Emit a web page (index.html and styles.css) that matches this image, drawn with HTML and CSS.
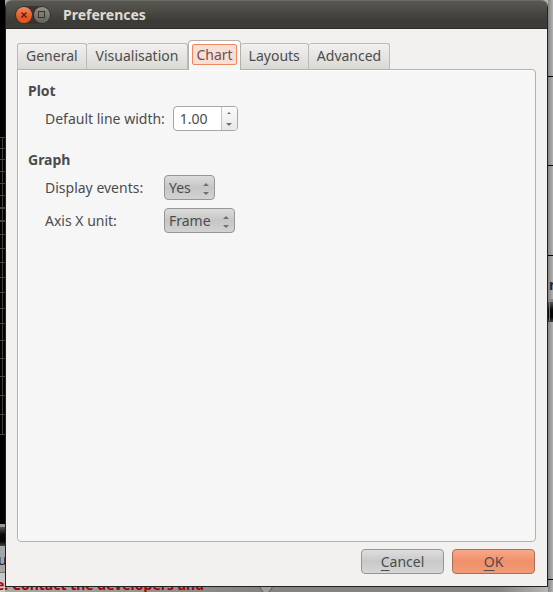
FILE: index.html
```html
<!DOCTYPE html>
<html lang="en">
<head>
<meta charset="utf-8">
<title>Preferences</title>
<link rel="stylesheet" href="styles.css">
</head>
<body>
<div class="backdrop">
  <svg class="backdrop-left" width="5" height="592" viewBox="0 0 5 592" aria-hidden="true">
    <defs>
      <linearGradient id="bar" x1="0" y1="0" x2="0" y2="1">
        <stop offset="0" stop-color="#555"/><stop offset=".4" stop-color="#080808"/><stop offset=".75" stop-color="#050505"/><stop offset="1" stop-color="#444"/>
      </linearGradient>
    </defs>
    <rect width="5" height="524" fill="#000"/>
    <path d="M2.5 137V434M0 137.500H5M0 148.500H5M0 159.500H5M0 171.500H5M0 183.500H5M0 195.500H5M0 234.500H5M0 248.500H5M0 262.500H5M0 277.500H5M0 292.500H5M0 308.500H5M0 323.500H5M0 340.500H5M0 358.500H5M0 376.500H5M0 395.500H5M0 414.500H5M0 434.500H5" stroke="#444"/>
    <path d="M0 208H5M0 221H5" stroke="#444" stroke-width="2"/>
    <rect y="524" width="5" height="3" fill="#999"/>
    <rect y="527" width="5" height="19" fill="url(#bar)"/>
    <rect y="546" width="5" height="46" fill="#a6a5a6"/>
    <rect y="572" width="5" height="1" fill="#777"/>
    <rect y="573" width="5" height="19" fill="#c9c8c9"/>
  </svg>
  <svg class="backdrop-right" width="5" height="592" viewBox="0 0 5 592" aria-hidden="true">
    <path d="M0 76.500H5M0 165.500H5M0 255.500H5M0 579.500H5" stroke="#000"/>
    <rect y="299" width="5" height="3" fill="#888"/>
    <rect y="302" width="5" height="20" fill="url(#bar)"/>
    <path d="M1.500 302V321" stroke="#777"/>
  </svg>
  <span class="backdrop-letter left-letter">u</span>
  <span class="backdrop-letter right-letter">n</span>
  <p class="backdrop-message">e: Contact the developers and</p>
  <svg class="backdrop-knob" width="16" height="16" viewBox="0 0 16 16" aria-hidden="true">
    <path d="M2 0V7L5.500 11.500H10.500L14 7V0" fill="#a09fa0" stroke="#555"/>
  </svg>
</div>

<main class="dialog">
  <header class="titlebar">
    <div class="window-controls">
      <button class="window-button close" type="button" aria-label="Close">
        <svg width="16" height="16" viewBox="0 0 16 16"><path d="M5.500 5.500L10.500 10.500M10.500 5.500L5.500 10.500" stroke="#4a2415" stroke-width="1.400"/></svg>
      </button>
      <button class="window-button maximize" type="button" aria-label="Maximize">
        <svg width="16" height="16" viewBox="0 0 16 16"><rect x="4.500" y="4.500" width="6" height="6" fill="none" stroke="#35342f"/></svg>
      </button>
    </div>
    <h1>Preferences</h1>
  </header>

  <form class="content">
    <nav class="tabs" role="tablist">
      <button class="tab" type="button" role="tab">General</button>
      <button class="tab" type="button" role="tab">Visualisation</button>
      <button class="tab active" type="button" role="tab" aria-selected="true"><span>Chart</span></button>
      <button class="tab" type="button" role="tab">Layouts</button>
      <button class="tab" type="button" role="tab">Advanced</button>
    </nav>

    <div class="panel" role="tabpanel">
      <section class="group">
        <h2>Plot</h2>
        <div class="row">
          <label for="line-width">Default line width:</label>
          <div class="spin">
            <input id="line-width" type="text" value="1.00">
            <div class="spin-buttons">
              <button type="button" aria-label="Increase"><svg width="6" height="3" viewBox="0 0 6 3"><path d="M1 3L3 1L5 3Z"/></svg></button>
              <button type="button" aria-label="Decrease"><svg width="6" height="3" viewBox="0 0 6 3"><path d="M0 0L3 3L6 0Z"/></svg></button>
            </div>
          </div>
        </div>
      </section>
      <section class="group">
        <h2>Graph</h2>
        <div class="row aligned">
          <label for="events">Display events:</label>
          <div class="picker">
            <select id="events"><option>Yes</option></select>
            <svg width="6" height="17" viewBox="0 0 6 17"><path d="M0 7L3 4L6 7ZM0 13L3 16L6 13Z"/></svg>
          </div>
        </div>
        <div class="row aligned">
          <label for="axis-unit">Axis X unit:</label>
          <div class="picker">
            <select id="axis-unit"><option>Frame</option></select>
            <svg width="6" height="17" viewBox="0 0 6 17"><path d="M0 7L3 4L6 7ZM0 13L3 16L6 13Z"/></svg>
          </div>
        </div>
      </section>
    </div>

    <footer class="actions">
      <button class="action" type="button"><u>C</u>ancel</button>
      <button class="action primary" type="submit"><u>O</u>K</button>
    </footer>
  </form>
</main>
</body>
</html>
```

FILE: styles.css
```css
* {
  box-sizing: border-box;
}

body {
  margin: 0;
  min-height: 100vh;
  padding: 0 5px 5px;
  display: flex;
  overflow: hidden;
  background: #a09fa0;
  color: #4c4c4c;
  font: 14px/20px "Noto Sans", "Open Sans", sans-serif;
}

button,
input,
select {
  margin: 0;
  padding: 0;
  color: inherit;
  font: inherit;
}

/* Window behind the dialog */
.backdrop {
  position: absolute;
  inset: 0;
  overflow: hidden;
  background: linear-gradient(90deg, #aaa, #858485 45%, #858485 90%, #bbb);
}

.backdrop-left {
  position: absolute;
  left: 0;
  top: 0;
}

.backdrop-right {
  position: absolute;
  right: 0;
  top: 0;
  background: linear-gradient(90deg, #858585, #b2b2b2);
}

.backdrop-letter {
  position: absolute;
  color: #252538;
}

.left-letter {
  left: -2px;
  top: 550px;
}

.right-letter {
  right: -5px;
  top: 275px;
  font-weight: bold;
}

.backdrop-message {
  position: absolute;
  left: -4px;
  top: 575px;
  margin: 0;
  color: #b00000;
  font-weight: bold;
  white-space: nowrap;
}

.backdrop-knob {
  position: absolute;
  left: 258px;
  top: 581px;
}

.dialog {
  position: relative;
  flex: 1;
  display: flex;
  flex-direction: column;
  border: 1px solid #222;
  border-top: 0;
  border-radius: 7px 7px 0 0;
  background: #f2f1f0;
}

.titlebar {
  display: flex;
  align-items: center;
  gap: 12px;
  height: 29px;
  padding: 0 9px;
  border-top: 1px solid #6b6963;
  border-bottom: 1px solid #2c2b28;
  border-radius: 6px 6px 0 0;
  background: linear-gradient(#5a5852, #3c3b37 75%);
}

.titlebar h1 {
  margin: 0;
  color: #dfdbd2;
  font-size: 14px;
  line-height: 20px;
}

.window-controls {
  display: flex;
  gap: 2px;
  padding: 1px;
  border-radius: 9px;
  background: #35342f;
}

.window-button {
  width: 16px;
  height: 16px;
  border: 0;
  border-radius: 50%;
}

.window-button svg,
.spin svg,
.picker svg {
  display: block;
}

.close {
  background: linear-gradient(#f58a5f, #e95420 65%, #e65a20);
}

.maximize {
  background: linear-gradient(#908e86, #65635c);
}

.content {
  flex: 1;
  display: flex;
  flex-direction: column;
  padding: 11px 11px 12px;
}

.tabs {
  position: relative;
  display: flex;
  align-items: flex-end;
  margin-bottom: -1px;
}

.tab {
  height: 27px;
  padding: 0 9px 2px;
  border: 1px solid #bdbab5;
  border-left-width: 0;
  border-bottom-color: #b4b1aa;
  border-radius: 3px 3px 0 0;
  background: linear-gradient(#f2f1f0, #dad8d5);
}

.tab:first-child {
  padding: 0 8px 2px;
  border-left-width: 1px;
}

.tab.active {
  height: 30px;
  padding: 0 3px 2px;
  border-color: #b4b1aa;
  border-left-width: 1px;
  border-bottom: 0;
  border-radius: 4px 4px 0 0;
  background: linear-gradient(#fff, #f6f6f6);
}

.tab.active ~ .tab {
  padding: 0 8px 2px;
}

.tab.active span {
  display: block;
  padding: 0 3px;
  border: 1px solid #f08763;
  border-radius: 2px;
  background: #f7ded6;
  color: #705048;
  line-height: 19px;
}

.panel {
  flex: 1;
  padding: 11px 10px;
  border: 1px solid #b4b1aa;
  border-radius: 0 4px 4px 4px;
  background: #f6f6f6;
  box-shadow: inset 1px 1px #fff;
}

.group {
  display: flex;
  flex-direction: column;
  gap: 8px;
  margin-bottom: 19px;
}

.group h2 {
  margin: 0 0 -3px;
  font-size: 14px;
  line-height: 20px;
}

.row {
  display: flex;
  align-items: center;
  gap: 8px;
  padding-left: 17px;
}

.aligned {
  display: grid;
  grid-template-columns: 111px max-content;
}

.spin {
  display: flex;
  height: 25px;
  border: 1px solid #aaa69f;
  border-radius: 4px;
  overflow: hidden;
  background: #fff;
}

.spin input {
  width: 47px;
  padding: 0 6px;
  border: 0;
  background: none;
}

.spin-buttons {
  display: flex;
  flex-direction: column;
  width: 16px;
  border-left: 1px solid #c8c5c0;
  background: linear-gradient(#fbfbfb, #e9e8e7);
}

.spin-buttons button {
  flex: 1;
  display: grid;
  place-items: center;
  border: 0;
  background: none;
}

.spin svg,
.picker svg {
  fill: #707070;
}

.picker {
  display: grid;
  align-items: center;
  justify-items: end;
}

.picker > * {
  grid-area: 1 / 1;
}

.picker select {
  appearance: none;
  height: 25px;
  padding: 0 23px 0 4px;
  border: 1px solid #969696;
  border-radius: 4px;
  background: linear-gradient(#dcdcdc, #c6c6c6 50%, #d2d2d2);
}

.picker svg {
  margin-right: 6px;
  pointer-events: none;
}

.actions {
  display: flex;
  justify-content: flex-end;
  gap: 8px;
  padding: 7px 1px 0;
}

.action {
  width: 83px;
  height: 25px;
  border: 1px solid #969696;
  border-radius: 4px;
  background: linear-gradient(#dedede, #c9c9c9 50%, #d6d6d6);
}

.action u {
  text-underline-offset: 3px;
}

.primary {
  border-color: #a8705c;
  background: linear-gradient(#f8a88a, #ef9069 50%, #f29a76);
}
```
